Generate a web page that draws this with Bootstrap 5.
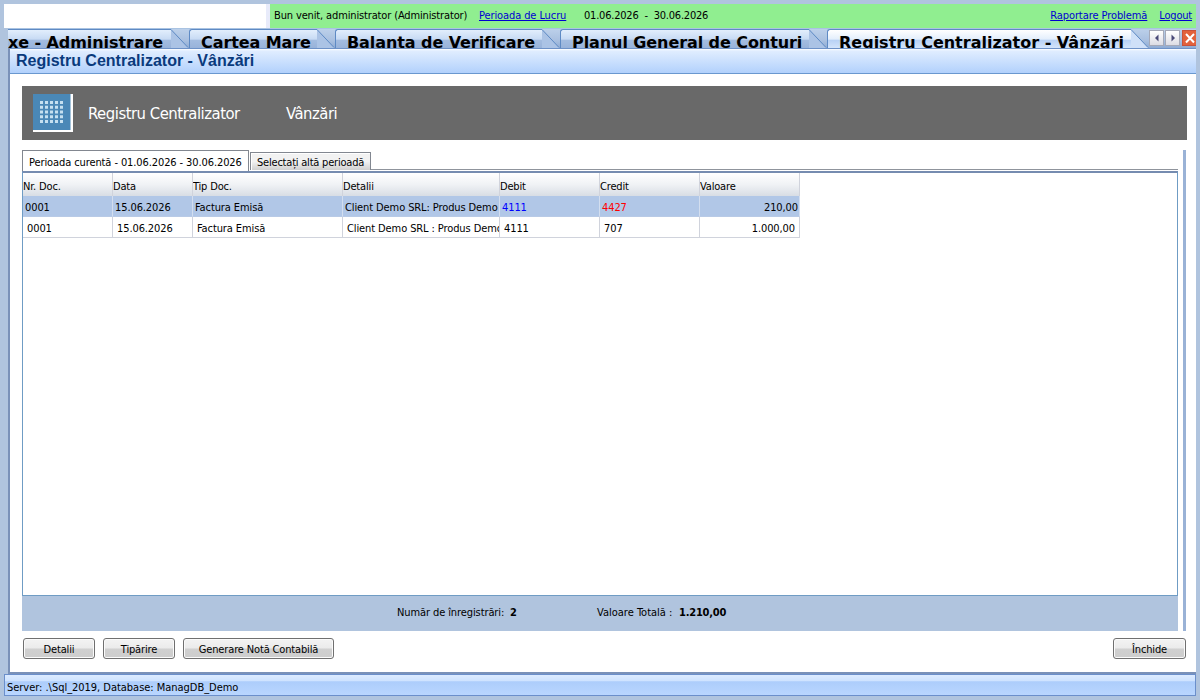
<!DOCTYPE html>
<html lang="ro">
<head>
<meta charset="utf-8">
<title>Registru Centralizator - Vânzări</title>
<link href="https://cdn.jsdelivr.net/npm/bootstrap@5.3.0/dist/css/bootstrap.min.css" rel="stylesheet">
<style>
body{width:1200px;height:700px;overflow:hidden;background:#b0c4de;padding:4px;font:11px/14px "DejaVu Sans Condensed","DejaVu Sans",sans-serif;font-stretch:condensed;color:#000;letter-spacing:-.1px;white-space:nowrap}
a{color:#0000d0}
.logo-area{width:262px;background:#fff}
.logo-gap{width:4px;background:#e8ebfa}
.topbar{height:24px}
.greenbar{background:#90ee90;padding:0 4px 1px}
.tabstrip{height:20px;margin-left:4px;background:linear-gradient(#bcd0ea,#a9c0e0 60%,#8fabd3);border-top:1px solid #a9c3e2;overflow:hidden}
.doc-tab{height:19px;border:solid #5e8ac4;border-width:1px 0 0 1px;border-top-left-radius:3px;background:linear-gradient(#e2eefc 0,#c8dbf4 50%,#a3bce0 58%,#98b3da);font:bold 16px/26px "DejaVu Sans",sans-serif;letter-spacing:-.08px;padding-left:11px}
.doc-tab.first{border-left:0;border-radius:0;padding-left:0}
.doc-tab.active{background:linear-gradient(#fff 0,#e4effc 50%,#b9d2f5 58%,#d3e4fb);letter-spacing:0}
.slant{width:18px;height:19px;flex:none;display:block}
.navbtn{width:15px;height:16px;background:linear-gradient(#fff,#dcdce4);border:1px solid #a5a9b8;margin:1px 1px 0 0}
.navbtn svg{display:block;margin:3px 0 0 3px}
.closebtn{width:14px;height:16px;background:#e2613c;border:1px solid #c8513a;border-right:0;margin-top:1px}
.workspace{height:626px;margin-left:4px;border:solid #7a91b8;border-width:0 0 2px 2px;background:#fff}
.titlebar{height:26px;border-top:1px solid #6e92c8;border-bottom:1px solid #6a98cf;background:linear-gradient(#fff 0,#e0edff 8%,#b2d1fc);font:bold 16px/24px "Liberation Sans",sans-serif;letter-spacing:0;color:#0a3a7c;padding-left:6px}
.banner{height:54px;margin:12px 9px 0 12px;background:#696969;color:#fff;font:16.5px/55px "DejaVu Sans Condensed",sans-serif;letter-spacing:-.47px}
.tabs-row{height:21px}
.tab-now{width:227px;height:21px;border:1px solid #828790;border-bottom:0;padding:5px 0 0 6px}
.tab-other{width:121px;height:18px;border:1px solid #828790;border-bottom:0;background:linear-gradient(#f2f2f2 50%,#d0d0d0);padding:3px 0 0 6px;margin:0 0 1px 1px;box-shadow:inset 1px 1px #fff;letter-spacing:-.21px}
.tab-rest{height:1px;background:#8f949c;margin-bottom:1px}
.content-row{margin:10px 10px 0 12px;height:481px}
.panel{width:1156px}
.grid-box{height:425px;border:1px solid #6f9cc4;border-top:2px solid #768cb0;overflow:hidden}
.grid-line{display:grid;grid-template-columns:90px 80px 150px 157px 100px 100px 100px;width:777px}
.grid-line>div{height:21px;border-right:1px solid #d0d3dc;border-bottom:1px solid #d0d3dc;overflow:hidden;padding:5px 0 0 4px}
.grid-line.heading>div{height:23px;padding:7px 0 0 0;border-bottom:0;background:linear-gradient(#fff,#f0f2f5 50%,#d8dde4);letter-spacing:-.17px}
.grid-line.chosen>div{background:#b1c7e7;padding-left:2px;padding-right:1px;border-bottom-color:#b8cae6;border-right-color:#d3deef}
.totals{height:35px;background:#b0c4de;padding-top:10px}
.totals b{letter-spacing:-.2px}
.side-rail{width:3px;background:#9ab2d6;margin-left:5px}
.cmd{height:21px;border:1px solid #707070;border-radius:3px;background:linear-gradient(#f3f3f3,#ebebeb 48%,#d0d0d0 52%,#cdcdcd);box-shadow:inset 0 0 0 1px #fbfbfb;padding:1px 0 0;text-align:center;font:inherit;letter-spacing:-.15px;color:#000;line-height:20px}
.status{height:22px;border:1px solid #6b8fcb;background:linear-gradient(#dcebff,#cfe3ff 28%,#adcdfb 34%,#b9d6ff);padding:6px 0 0 2px;letter-spacing:-.03px}
</style>
</head>
<body>
<div class="topbar d-flex">
  <div class="logo-area"></div><div class="logo-gap"></div>
  <div class="greenbar flex-fill d-flex align-items-center">
    <span style="width:205px;letter-spacing:-.14px">Bun venit, administrator (Administrator)</span>
    <a href="#" style="width:105px">Perioada de Lucru</a>
    <span style="letter-spacing:-.21px">01.06.2026 &nbsp;-&nbsp; 30.06.2026</span>
    <a href="#" class="ms-auto" style="letter-spacing:-.08px">Raportare Problemă</a><a href="#" style="margin-left:12px;letter-spacing:-.2px">Logout</a>
  </div>
</div>
<div class="tabstrip d-flex">
  <div class="doc-tab first" style="width:163px">xe - Administrare</div><svg class="slant"><path d="M0 .5L17 18.5V19H0Z" fill="#abc3e5"/><path d="M0 .5L17 18.5" stroke="#5e8ac4"/></svg>
  <div class="doc-tab" style="width:128px">Cartea Mare</div><svg class="slant"><path d="M0 .5L17 18.5V19H0Z" fill="#abc3e5"/><path d="M0 .5L17 18.5" stroke="#5e8ac4"/></svg>
  <div class="doc-tab" style="width:207px">Balanta de Verificare</div><svg class="slant"><path d="M0 .5L17 18.5V19H0Z" fill="#abc3e5"/><path d="M0 .5L17 18.5" stroke="#5e8ac4"/></svg>
  <div class="doc-tab" style="width:249px">Planul General de Conturi</div><svg class="slant"><path d="M0 .5L17 18.5V19H0Z" fill="#abc3e5"/><path d="M0 .5L17 18.5" stroke="#5e8ac4"/></svg>
  <div class="doc-tab active" style="width:304px">Registru Centralizator - Vânzări</div><svg class="slant"><path d="M0 .5L17 18.5V19H0Z" fill="#cfe0f8"/><path d="M0 .5L17 18.5" stroke="#5e8ac4"/></svg>
  <div class="navbtn"><svg width="8" height="8"><path d="M5.500 0.500L2 4L5.500 7.500Z" fill="#4a4a78"/></svg></div>
  <div class="navbtn"><svg width="8" height="8"><path d="M2.500 0.500L6 4L2.500 7.500Z" fill="#4a4a78"/></svg></div>
  <div class="closebtn ms-auto"><svg width="13" height="14" style="display:block"><path d="M3 3L11 11.500M11 3L3 11.500" stroke="#fff" stroke-width="2"/></svg></div>
</div>
<div class="workspace">
  <div class="titlebar">Registru Centralizator - Vânzări</div>
  <div class="banner d-flex">
    <svg width="66" height="54" class="flex-shrink-0"><path d="M11 8h40v38h-40z" fill="#fff"/><path d="M11 8h37.500v36h-37.500z" fill="#4a88b7"/><path d="M18 16.500h24M18 21.250h24M18 26h24M18 30.750h24M18 35.500h24" stroke="#c5e0f0" stroke-width="3" stroke-dasharray="3 2"/></svg>
    <span style="width:198px">Registru Centralizator</span><span>Vânzări</span>
  </div>
  <div class="content-row d-flex">
    <div class="panel">
      <div class="tabs-row d-flex align-items-end"><div class="tab-now">Perioada curentă - 01.06.2026 - 30.06.2026</div><div class="tab-other">Selectați altă perioadă</div><div class="tab-rest flex-fill"></div></div>
      <div class="grid-box">
        <div class="grid-line heading"><div>Nr. Doc.</div><div>Data</div><div>Tip Doc.</div><div>Detalii</div><div>Debit</div><div>Credit</div><div>Valoare</div></div>
        <div class="grid-line chosen"><div>0001</div><div>15.06.2026</div><div>Factura Emisă</div><div>Client Demo SRL: Produs Demo</div><div style="color:#00f">4111</div><div style="color:#f00">4427</div><div class="text-end">210,00</div></div>
        <div class="grid-line"><div>0001</div><div>15.06.2026</div><div>Factura Emisă</div><div>Client Demo SRL : Produs Demo</div><div>4111</div><div>707</div><div class="text-end pe-1">1.000,00</div></div>
      </div>
      <div class="totals d-flex"><span style="margin-left:375px;width:113px">Număr de înregistrări:</span><b style="width:87px">2</b><span style="width:82px;letter-spacing:0">Valoare Totală :</span><b>1.210,00</b></div>
    </div>
    <div class="side-rail"></div>
  </div>
  <div class="d-flex" style="margin:7px 10px 0 13px;gap:8px">
    <button class="cmd" style="width:72px">Detalii</button><button class="cmd" style="width:72px">Tipărire</button><button class="cmd" style="width:151px">Generare Notă Contabilă</button><button class="cmd ms-auto" style="width:73px">Închide</button>
  </div>
</div>
<div class="status">Server: .\Sql_2019, Database: ManagDB_Demo</div>
<script src="https://cdn.jsdelivr.net/npm/bootstrap@5.3.0/dist/js/bootstrap.bundle.min.js"></script>
</body>
</html>
